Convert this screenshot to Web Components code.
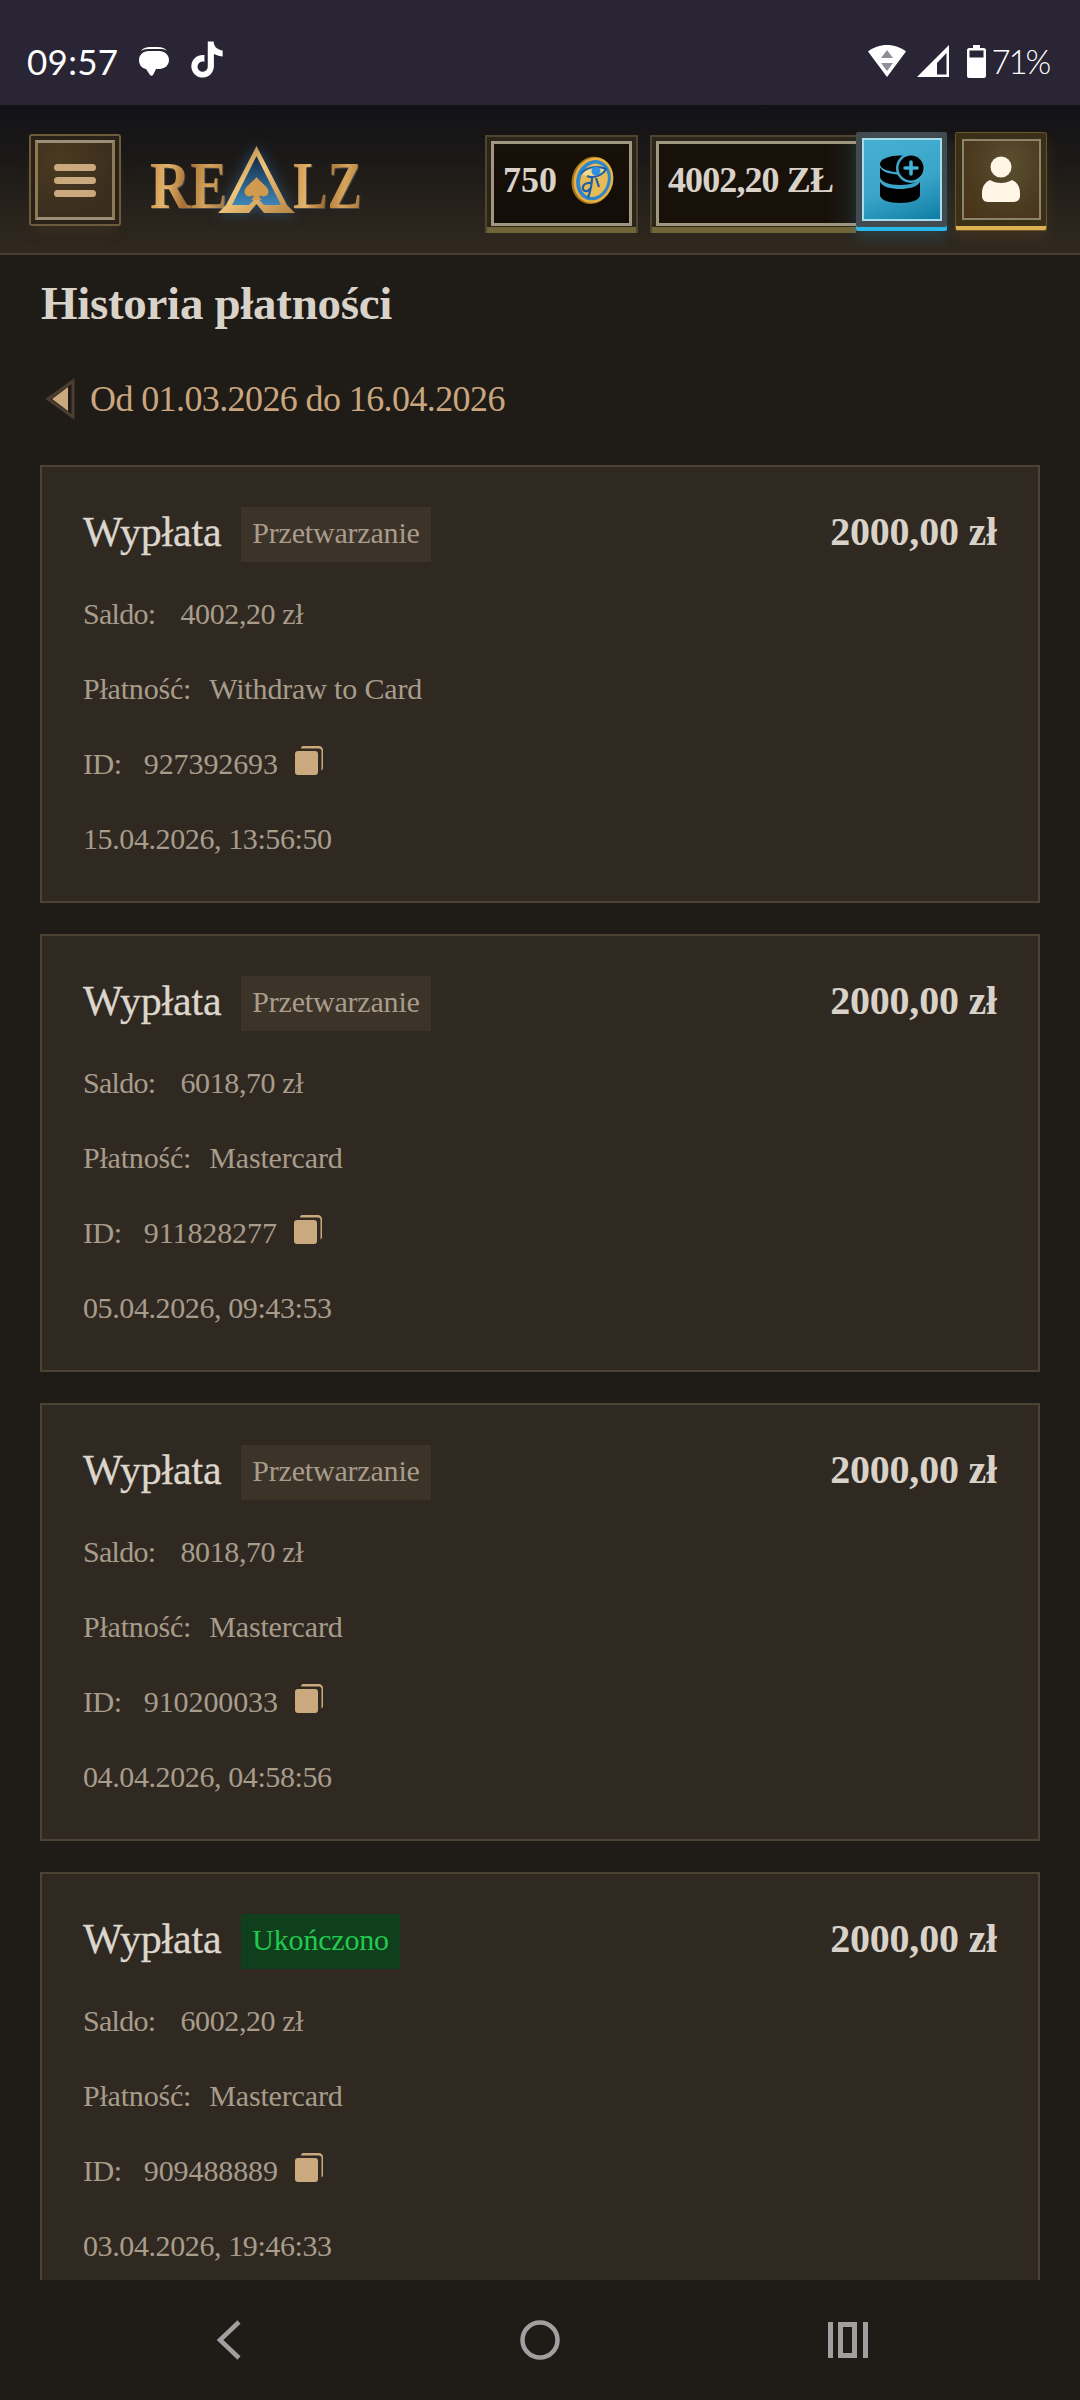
<!DOCTYPE html>
<html lang="pl">
<head>
<meta charset="utf-8">
<title>Historia płatności</title>
<style>
html,body{margin:0;padding:0;background:#1f1b17}
body{width:1080px;height:2400px;overflow:hidden;display:flex;flex-direction:column;font-family:"Liberation Serif",serif}
</style>
</head>
<body>
<status-bar></status-bar>
<site-header></site-header>
<page-main>
  <pay-card status="Przetwarzanie" amount="2000,00 zł" saldo="4002,20 zł" method="Withdraw to Card" pid="927392693" date="15.04.2026, 13:56:50"></pay-card>
  <pay-card status="Przetwarzanie" amount="2000,00 zł" saldo="6018,70 zł" method="Mastercard" pid="911828277" date="05.04.2026, 09:43:53"></pay-card>
  <pay-card status="Przetwarzanie" amount="2000,00 zł" saldo="8018,70 zł" method="Mastercard" pid="910200033" date="04.04.2026, 04:58:56"></pay-card>
  <pay-card status="Ukończono" done amount="2000,00 zł" saldo="6002,20 zł" method="Mastercard" pid="909488889" date="03.04.2026, 19:46:33"></pay-card>
</page-main>
<nav-bar></nav-bar>

<script>
function def(name, html){
  customElements.define(name, class extends HTMLElement{
    connectedCallback(){ if(!this.shadowRoot){this.attachShadow({mode:'open'}).innerHTML=typeof html==='function'?html(this):html;} }
  });
}

def('status-bar',`<style>
:host{display:flex;align-items:center;height:105px;flex:none;box-sizing:border-box;background:#292534;color:#fff;padding:17px 31px 0 27px;font-family:Lato,"Noto Sans",sans-serif;font-size:35px}
.t{letter-spacing:.3px}
.left{display:flex;align-items:center}
.sp{flex:1}
svg{display:block}
</style>
<div class="left"><span class="t">09:57</span>
<svg style="margin-left:20px" width="32" height="32" viewBox="0 0 32 32"><path d="M3 6c2-3 5-4 10-4h7c4 0 7 1 9 4-2-2-5-2-9-2h-7c-4 0-7 0-10 2z" fill="#fff"/><path d="M1 15c0-5 4-9 10-9h10c6 0 10 4 10 9s-4 9-10 9h-3l-3 6c-1 1-2 1-3 0l-4-6c-5-1-7-5-7-9z" fill="#fff"/></svg>
<svg style="margin-left:19px;margin-top:-3px" width="36" height="39" viewBox="0 0 24 24"><path fill="#fff" d="M12.525.02c1.31-.02 2.61-.01 3.91-.02.08 1.53.63 3.09 1.75 4.17 1.12 1.11 2.7 1.62 4.24 1.79v4.03c-1.44-.05-2.89-.35-4.2-.97-.57-.26-1.1-.59-1.62-.93-.01 2.92.01 5.84-.02 8.75-.08 1.4-.54 2.79-1.35 3.94-1.31 1.92-3.58 3.17-5.91 3.21-1.43.08-2.86-.31-4.08-1.03-2.02-1.19-3.44-3.37-3.65-5.71-.02-.5-.03-1-.01-1.49.18-1.9 1.12-3.72 2.58-4.96 1.66-1.44 3.98-2.13 6.15-1.72.02 1.48-.04 2.96-.04 4.44-.99-.32-2.15-.23-3.02.37-.63.41-1.11 1.04-1.36 1.75-.21.51-.15 1.07-.14 1.61.24 1.64 1.82 3.02 3.5 2.87 1.12-.01 2.19-.66 2.77-1.61.19-.33.4-.67.41-1.06.1-1.79.06-3.57.07-5.36.01-4.03-.01-8.05.02-12.07z"/></svg>
</div>
<div class="sp"></div>
<svg width="38" height="32" viewBox="0 0 38 32"><path d="M19 0C12 0 5 2.500 0 6.500L19 32 38 6.500C33 2.500 26 0 19 0z" fill="#fff"/><path d="M19 5l6 8H13z" fill="#8f8d96"/><path d="M13 18h12l-6 8z" fill="#8f8d96"/></svg>
<svg style="margin-left:11px" width="32" height="32" viewBox="0 0 32 32"><path d="M32 0v32H0z" fill="#fff"/><path d="M29.500 8v21.500H20V18z" fill="#292534"/></svg>
<svg style="margin-left:18px" width="19" height="33" viewBox="0 0 19 33"><path d="M6 0h7v3h4c1 0 2 1 2 2v26c0 1-1 2-2 2H2c-1 0-2-1-2-2V5c0-1 1-2 2-2h4z" fill="#fff"/><rect x="2.500" y="5.500" width="14" height="7" fill="#292534"/></svg>
<span style="margin-left:6px;letter-spacing:-2.200px;font-size:33px;font-weight:300">71%</span>`);

def('gold-frame',`<style>
:host{display:flex;box-sizing:border-box;height:98px;background:#2a2518;border:2px solid #4f452f;border-bottom:0;padding:4px 4px 7px;box-shadow:inset 0 -6px 0 #6f6539}
.in{flex:1;display:flex;align-items:center;box-sizing:border-box;border:3px solid #a1967f;background:linear-gradient(#181109,#130d08);color:#d8d2c8;font:700 36px "Liberation Serif",serif;padding:0 9px 7px;white-space:nowrap}
:host([open]) .in{border-right:0;background:linear-gradient(90deg,#181109 85%,#1e1d18)}
:host([open]){padding-right:0;border-right:0}
</style><div class="in"><slot></slot></div>`);

def('menu-button',`<style>
:host{display:flex;box-sizing:border-box;width:92px;height:92px;border:2px solid #6d5c3c;border-radius:3px;padding:4px;background:#2a2218;box-shadow:0 12px 14px -6px rgba(120,95,55,.18)}
.in{flex:1;box-sizing:border-box;border:3px solid #9c8f77;background:radial-gradient(circle at 30% 25%,#4a3a20,#3a2c1e 80%);display:flex;flex-direction:column;align-items:center;justify-content:center;gap:6px;border-left-color:#8c7a55;border-right-color:#8c7a55}
i{display:block;width:42px;height:7px;border-radius:4px;background:#cba97f}
</style><div class="in"><i></i><i></i><i></i></div>`);

def('site-logo',`<style>
:host{display:flex;align-items:flex-start;width:212px;height:67px;flex:none}
.w{display:block;flex:none;height:67px}
.t{display:block;width:max-content;font:700 68px/1 "Liberation Serif",serif;white-space:nowrap;padding-top:5px;background:linear-gradient(100deg,#c48d47,#e3b36c 25%,#a56f33 48%,#d6a55c 72%,#a37036);-webkit-background-clip:text;background-clip:text;color:transparent;transform-origin:0 0;filter:drop-shadow(1px 1px 0 #4d4a48)}
.a{width:68px}.a .t{transform:scaleX(.82)}
.b{width:69px;margin-left:-2px}.b .t{transform:scaleX(.76)}
svg{flex:none;overflow:visible;filter:drop-shadow(0 0 7px rgba(50,120,190,.5));position:relative}
</style>
<span class="w a"><span class="t">RE</span></span>
<svg width="77" height="67" viewBox="0 0 77 67"><defs>
<linearGradient id="g" x1="0" y1="0" x2="1" y2="1"><stop offset="0" stop-color="#8f6228"/><stop offset=".45" stop-color="#f0c67c"/><stop offset="1" stop-color="#b78443"/></linearGradient>
<linearGradient id="b" x1="0" y1="0" x2="0" y2="1"><stop offset="0" stop-color="#122a44"/><stop offset="1" stop-color="#3f86b8"/></linearGradient></defs>
<path d="M38.500 0L69 59l8 8H46l-7.500-9L31 67H0l8-8z" fill="url(#g)"/>
<path d="M38.500 10L63 59H46l-7.500-8L31 59H14z" fill="url(#b)"/>
<path d="M38.500 31c3 5 12 9 12 15 0 4-5 6-9 3 0 3 1 4 2.500 5h-11c1.500-1 2.500-2 2.500-5-4 3-9 1-9-3 0-6 9-10 12-15z" fill="#d19a4c"/></svg>
<span class="w b"><span class="t">LZ</span></span>`);

def('eye-coin',`<style>:host{display:block;width:46px;height:48px;flex:none}svg{display:block}</style>
<svg width="46" height="48" viewBox="0 0 46 48">
<g transform="rotate(18 23 24)"><ellipse cx="22.500" cy="24.500" rx="20.500" ry="24" fill="#a9741c"/><ellipse cx="23.500" cy="24" rx="19.500" ry="23" fill="#e6b33f"/><ellipse cx="23.500" cy="24" rx="17" ry="20.500" fill="#2f86cf"/><ellipse cx="24" cy="24" rx="13.500" ry="17" fill="#e7bb55"/></g>
<path d="M11 18c5-7 16-9 25-5-3 6-13 10-19 7" fill="#f3d98a" stroke="#1c5fa8" stroke-width="2"/>
<circle cx="26" cy="15" r="4.500" fill="#2f8fe0"/>
<path d="M22 22c0 8-2 14-4 20M26 22l3 9M22 27c-6-1-10 2-9 6 1 3 6 3 7-1" fill="none" stroke="#1c5fa8" stroke-width="2.200"/>
</svg>`);

def('blue-button',`<style>
:host{display:flex;box-sizing:border-box;width:91px;height:99px;flex:none;margin-top:-2px;padding:6px 5px 10px 6px;background:#414b50;border-radius:2px;box-shadow:inset 0 -4px 0 #27b9ea,0 8px 14px rgba(40,170,220,.18)}
.in{flex:1;box-sizing:border-box;border:2.500px solid #a3dcec;background:linear-gradient(160deg,#46b0d2,#3ba5c9 55%,#0f7ea5);display:flex;align-items:center;justify-content:center;padding-bottom:2px}
svg{display:block}
</style><div class="in"><svg width="46" height="48" viewBox="0 0 46 48">
<ellipse cx="21" cy="9" rx="20" ry="8.500"/>
<path d="M1 12.500c3 5 11 7 20 7 9 0 17-2 20-7v9c0 5-9 8.500-20 8.500S1 26.500 1 21.500z"/>
<path d="M1 27c3 5 11 7 20 7 9 0 17-2 20-7v13c0 5-9 8-20 8S1 45 1 40z"/>
<circle cx="32" cy="13" r="15" fill="#3fa9cc"/><circle cx="32" cy="13" r="12.500"/>
<path d="M32 7v12M26 13h12" stroke="#3fb2d6" stroke-width="3.600" stroke-linecap="round"/>
</svg></div>`);

def('avatar-button',`<style>
:host{display:flex;box-sizing:border-box;width:92px;height:99px;flex:none;margin:-2px 0 0 8px;padding:6px 5px 10px 6px;background:#3a3018;border:1px solid #6a5526;border-radius:2px;box-shadow:inset 0 -4px 0 #dcb254,0 8px 14px rgba(170,130,60,.15)}
.in{flex:1;box-sizing:border-box;border:2.500px solid #8d8470;background:radial-gradient(ellipse at 60% 30%,#5c4f30,#4b3b20 60%,#4a3215);display:flex;align-items:center;justify-content:center;padding:0 2px 2px 0}
svg{display:block}
</style><div class="in"><svg width="38" height="46" viewBox="0 0 38 46" fill="#fff6e6">
<circle cx="19" cy="11" r="10.500"/>
<path d="M8 24c3 2 7 3 11 3s8-1 11-3c5 2 8 7 8 13v3c0 3-2 6-6 6H6c-4 0-6-3-6-6v-3c0-6 3-11 8-13z"/>
</svg></div>`);

def('site-header',`<style>
:host{display:flex;align-items:flex-start;flex:none;height:150px;box-sizing:border-box;padding:29px 33px 0 29px;background:linear-gradient(#131217,#1b1917 35%,#31291f);border-bottom:2px solid #4a3f30;color:#d8d2c8}
site-logo{margin:12px 0 0 29px}
.sp{flex:1}
.b1{width:153px;margin-top:1px}
.b2{width:206px;margin:1px 0 0 12px}
.n{margin-right:13px}
.m{letter-spacing:-.9px}
</style>
<menu-button></menu-button><site-logo></site-logo><div class="sp"></div>
<gold-frame class="b1"><span class="n">750</span><eye-coin></eye-coin></gold-frame>
<gold-frame class="b2" open><span class="m">4002,20 ZŁ</span></gold-frame>
<blue-button></blue-button><avatar-button></avatar-button>`);

def('date-range',`<style>
:host{display:flex;align-items:center;color:#c9a67e;font:36px/60px "Liberation Serif",serif;letter-spacing:-.6px}
svg{display:block;margin:0 15px 0 5px}
</style>
<svg width="30" height="42" viewBox="0 0 30 42"><path d="M28 3v36L3 21z" fill="none" stroke="#4a3e30" stroke-width="3"/><path d="M23 9v24L7 21z" fill="#cba97f"/></svg>
<slot></slot>`);

def('page-main',`<style>
:host{flex:1;min-height:0;overflow:hidden;display:block;box-sizing:border-box;padding:18px 40px 0 40px;background:#1f1b17}
h1{margin:0 0 0 1px;font:700 47px/60px "Liberation Serif",serif;color:#d8d2c8;letter-spacing:-.3px}
date-range{margin:36px 0 0 0}
.list{display:flex;flex-direction:column;gap:31px;margin-top:36px}
</style>
<h1>Historia płatności</h1>
<date-range>Od 01.03.2026 do 16.04.2026</date-range>
<div class="list"><slot></slot></div>`);

def('pay-card',(h)=>`<style>
:host{display:block;box-sizing:border-box;height:438px;flex:none;background:#302922;border:2px solid #4d4334;padding:40px 41px 0 41px;font:30px/75px "Liberation Serif",serif;color:#a89c8b;letter-spacing:-.2px}
.head{display:flex;align-items:center;height:55px;margin-bottom:14px}
.ty{font-size:42px;line-height:55px;color:#dcd6cc;-webkit-text-stroke:.3px #dcd6cc;margin-top:-4px}
.bd{margin-left:20px;height:55px;line-height:52px;padding:0 11px;background:#3c3329;color:#a89c8b;font-size:30px}
.bd.ok{background:#0f3f1c;color:#22c94f}
.am{margin-left:auto;font-weight:700;font-size:40px;line-height:50px;color:#d8d2c8;align-self:flex-start}
.r{height:75px;display:flex;align-items:center;white-space:nowrap}
.d{letter-spacing:-.4px}
svg{display:block;margin-left:17px;margin-top:-6px}
</style>
<div class="head"><span class="ty">Wypłata</span><span class="bd${h.hasAttribute('done')?' ok':''}">${h.getAttribute('status')}</span><span class="am">${h.getAttribute('amount')}</span></div>
<div class="r"><span style="margin-right:25px;letter-spacing:-.7px">Saldo:</span><span class="d">${h.getAttribute('saldo')}</span></div>
<div class="r"><span style="margin-right:18px">Płatność:</span><span style="letter-spacing:-.15px">${h.getAttribute('method')}</span></div>
<div class="r"><span class="d" style="margin-right:22px">ID:</span><span style="letter-spacing:-.1px">${h.getAttribute('pid')}</span>
<svg width="28" height="29" viewBox="0 0 28 29"><path d="M8 0h16c2 0 4 2 4 4v18c0 1-.5 2-1.500 2.500V5c0-1.500-1-2.500-2.500-2.500H6C6 1 7 0 8 0z" fill="#cba97f"/><rect x="0" y="5" width="23" height="24" rx="3" fill="#cba97f"/></svg></div>
<div class="r"><span class="d">${h.getAttribute('date')}</span></div>`);

def('nav-bar',`<style>
:host{display:flex;flex:none;height:120px;background:#1f1b17;box-sizing:border-box;padding-top:40px}
svg{display:block;flex:none}
</style>
<svg style="margin-left:216px" width="26" height="40" viewBox="0 0 26 40"><path d="M23 2L4 20l19 18" fill="none" stroke="#a0a0a0" stroke-width="4.500"/></svg>
<svg style="margin-left:278px" width="40" height="40" viewBox="0 0 40 40"><circle cx="20" cy="20" r="17.500" fill="none" stroke="#a0a0a0" stroke-width="4.500"/></svg>
<svg style="margin-left:268px;margin-top:2px" width="40" height="36" viewBox="0 0 40 36" fill="#a0a0a0"><rect width="5" height="36"/><rect x="35" width="5" height="36"/><path d="M10 0h19v36H10zM15 5v26h9V5z" fill-rule="evenodd"/></svg>`);
</script>
</body>
</html>
